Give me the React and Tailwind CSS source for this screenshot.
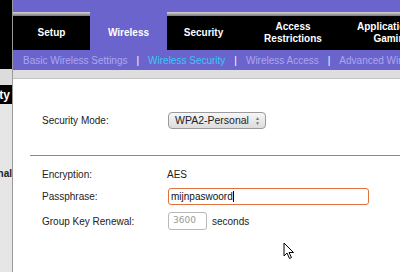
import React from 'react';

const tabs = [
  { label: ['Setup'], w: 'w-[77px]' },
  { label: ['Wireless'], w: 'w-[77px]', active: true },
  { label: ['Security'], w: 'w-[73px]' },
  { label: ['Access', 'Restrictions'], w: 'w-[106px]' },
  { label: ['Applications &', 'Gaming'], w: 'w-[92px]' },
];

function Cursor() {
  return (
    <svg width="12" height="18" viewBox="0 0 12 18" className="absolute left-[283px] top-[242px]">
      <path d="M1 1 L1 14 L4 11 L6.5 16.5 L8.5 15.5 L6 10.5 L10.5 10.5 Z" fill="white" stroke="black" strokeWidth="1" strokeLinejoin="round" />
    </svg>
  );
}

export default function App() {
  return (
    <div className="relative w-[400px] h-[272px] overflow-hidden flex bg-white font-['Liberation_Sans',Arial,sans-serif]">
      {/* left column */}
      <div className="w-[13px] shrink-0 flex flex-col border-r border-[#9a9a9a]">
        <div className="h-[69px] bg-black" />
        <div className="h-[16px] bg-[#dcdcdc]" />
        <div className="h-[19px] bg-black flex items-center justify-end overflow-hidden pr-[2px]">
          <span className="text-white font-bold text-[12px] whitespace-nowrap">Security</span>
        </div>
        <div className="flex-1 bg-[#e6e6e6] overflow-hidden">
          <div className="mt-[62px] flex justify-end">
            <span className="text-[#222] font-bold text-[10px] whitespace-nowrap">Optional</span>
          </div>
        </div>
      </div>

      {/* main */}
      <div className="flex-1 flex flex-col min-w-0">
        <div className="flex h-[50px] overflow-hidden">
          {tabs.map((t) => (
            <div key={t.label[0]} className={`${t.w} shrink-0 flex flex-col`}>
              <div className="h-[12px] bg-[#6b64cc]" />
              {t.active ? (
                <div className="flex-1 bg-[#6b64cc] flex items-center justify-center pt-[3px]">
                  <span className="text-white font-bold text-[10px]">{t.label[0]}</span>
                </div>
              ) : (
                <>
                  <div className="h-[4px] bg-gradient-to-b from-[#d8d8d8] to-[#7a7a7a]" />
                  <div className="flex-1 bg-black flex flex-col items-center justify-center leading-[12px]">
                    {t.label.map((l) => (
                      <span key={l} className="text-white font-bold text-[10px] whitespace-nowrap">{l}</span>
                    ))}
                  </div>
                </>
              )}
            </div>
          ))}
        </div>

        {/* sub nav */}
        <div className="h-[20px] bg-[#6b64cc] flex items-center pl-[10px] text-[10px] whitespace-nowrap overflow-hidden">
          <span className="text-[#aba6ee]">Basic Wireless Settings</span>
          <span className="text-white mx-[9px]">|</span>
          <span className="text-[#3cc6f4]">Wireless Security</span>
          <span className="text-white mx-[9px]">|</span>
          <span className="text-[#aba6ee]">Wireless Access</span>
          <span className="text-white mx-[9px]">|</span>
          <span className="text-[#aba6ee]">Advanced Wireless Settings</span>
        </div>

        <div className="h-[8px] bg-[#dedede]" />

        {/* content */}
        <div className="flex-1 bg-white border-t border-[#c4c4c4] text-[10px] text-[#222]">
          <div className="flex items-center mt-[33px] h-[17px]">
            <span className="ml-[29px] w-[126px]">Security Mode:</span>
            <div className="w-[98px] h-[17px] rounded-[4px] border border-[#9a9a9a] bg-gradient-to-b from-[#f6f6f6] to-[#dcdcdc] flex items-center pl-[6px] pr-[5px] text-[10.5px] text-[#222]">
              <span className="flex-1">WPA2-Personal</span>
              <span className="flex flex-col items-center leading-[5px] text-[5px] text-[#777]">
                <span>▲</span>
                <span>▼</span>
              </span>
            </div>
          </div>

          <div className="mt-[26px] ml-[17px] border-t border-[#8a8a8a]" />

          <div className="flex items-center mt-[11px] h-[14px]">
            <span className="ml-[29px] w-[125px]">Encryption:</span>
            <span>AES</span>
          </div>

          <div className="flex items-center mt-[7px] h-[17px]">
            <span className="ml-[29px] w-[126px]">Passphrase:</span>
            <div className="w-[201px] h-[17px] rounded-[3px] border border-[#e0703c] flex items-center pl-[2px] text-[10px] text-[#111]">
              mijnpaswoord<span className="w-px h-[11px] bg-black" />
            </div>
          </div>

          <div className="flex items-center mt-[7px] h-[18px]">
            <span className="ml-[29px] w-[126px]">Group Key Renewal:</span>
            <div className="w-[39px] h-[18px] rounded-[3px] border border-[#b8b8b8] flex items-center pl-[4px] font-['DejaVu_Sans',sans-serif] text-[9px] text-[#999]">
              3600
            </div>
            <span className="ml-[5px]">seconds</span>
          </div>
        </div>
      </div>

      <Cursor />
    </div>
  );
}
